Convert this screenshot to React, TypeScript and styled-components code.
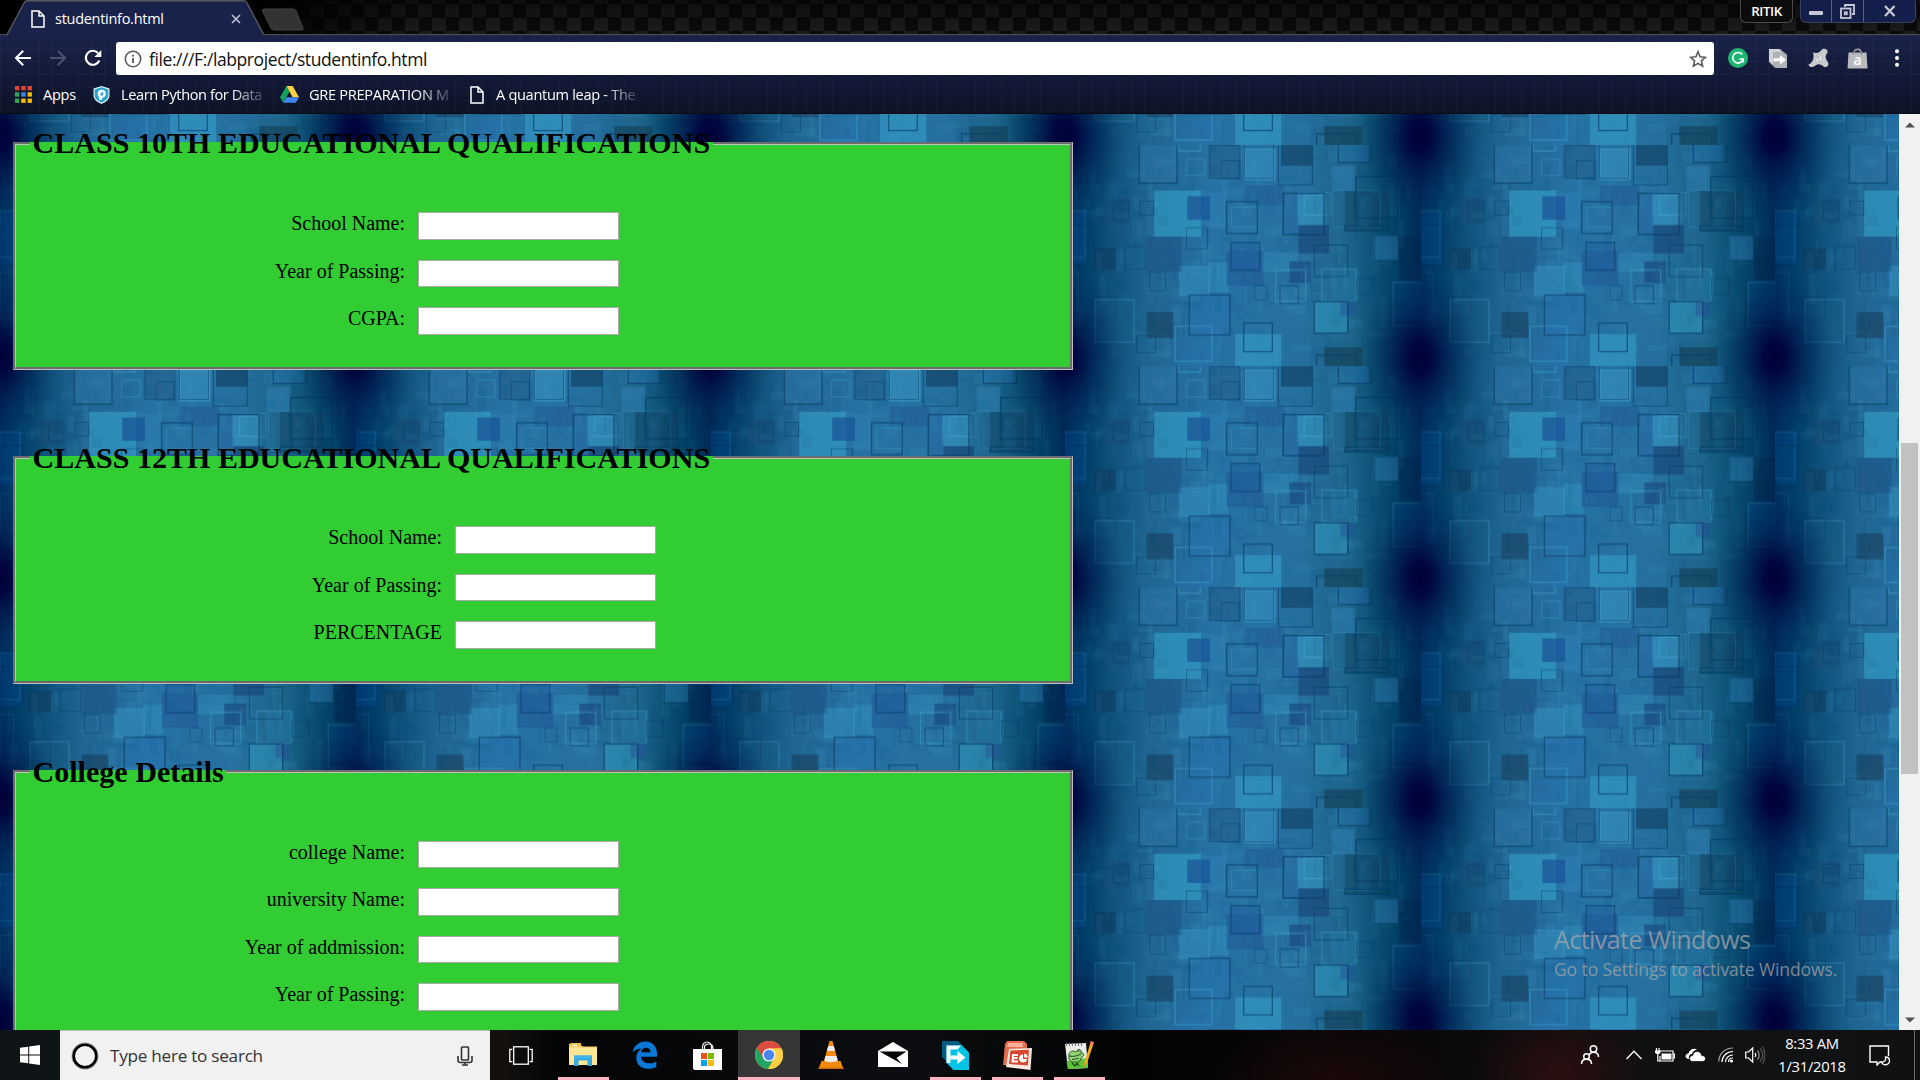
import React from 'react';
import styled, { createGlobalStyle } from 'styled-components';

const ui = '"Open Sans", "Noto Sans", sans-serif';
const serif = '"Liberation Serif", "Times New Roman", serif';

const GlobalStyle = createGlobalStyle`
  * { box-sizing: border-box; }
  html, body { margin: 0; padding: 0; background: #000; overflow: hidden; }
  svg { display: block; flex: none; }
`;

const Screen = styled.div`
  width: 1920px;
  height: 1080px;
  display: grid;
  grid-template-columns: 1920px;
  grid-template-rows: 114px 916px 50px;
  overflow: hidden;
  font-family: ${ui};
`;

/* ---------- browser chrome ---------- */

const Browser = styled.header`
  display: grid;
  grid-template-columns: 1920px;
  grid-template-rows: 35px 46px 33px;
  background:
    repeating-linear-gradient(90deg, rgba(120, 150, 220, 0.05) 0 1px, transparent 1px 13px),
    repeating-linear-gradient(0deg, rgba(120, 150, 220, 0.05) 0 1px, transparent 1px 13px),
    linear-gradient(#19224a 30%, #0d1226 100%);
`;

const TabStrip = styled.div`
  display: flex;
  justify-content: space-between;
  border-bottom: 1px solid #4c4c4c;
  background:
    linear-gradient(90deg, #000 0, #000 250px, transparent 420px),
    linear-gradient(rgba(0, 0, 0, 0.55), rgba(0, 0, 0, 0.05)),
    repeating-conic-gradient(#1e1e1e 0 25%, #0b0b0b 0 50%) 0 4px / 27px 27px;
`;

const Tabs = styled.div`
  display: flex;
  padding-left: 7px;
`;

const Tab = styled.div`
  position: relative;
  width: 257px;
  height: 36px;
  display: flex;
  align-items: center;
  padding: 2px 23px 0 24px;
  color: #fff;
`;

const TabShape = styled.svg`
  position: absolute;
  inset: 0;
`;

const TabTitle = styled.span`
  position: relative;
  margin-left: 10px;
  flex: 1;
  font-size: 14.5px;
  letter-spacing: -0.28px;
  line-height: 20px;
  margin-top: -1px;
`;

const Layer = styled.span`
  position: relative;
`;

const NewTab = styled.svg`
  margin: 8px 0 0 -3px;
`;

const WindowArea = styled.div`
  display: flex;
  align-items: flex-start;
  gap: 7px;
  padding-right: 4px;
`;

const UserBadge = styled.div`
  width: 53px;
  height: 23px;
  border: 1px solid #4a4a4a;
  border-top: 0;
  border-radius: 0 0 6px 6px;
  background: #0c0c0c;
  color: #fff;
  font-size: 13.3px;
  font-weight: 600;
  letter-spacing: -0.4px;
  line-height: 22px;
  text-align: center;
`;

const WindowButtons = styled.div`
  display: flex;
  height: 23px;
  border: 1px solid #39415f;
  border-top: 0;
  border-radius: 0 0 6px 6px;
  background: #131e4a;
  overflow: hidden;
`;

const WindowButton = styled.div<{ $w: number }>`
  width: ${(p) => p.$w}px;
  display: flex;
  align-items: center;
  justify-content: center;
  & + & { border-left: 1px solid #59617e; }
`;

const Toolbar = styled.div`
  display: flex;
  align-items: center;
  padding: 0 0 0 14px;
`;

const NavButtons = styled.div`
  display: flex;
  align-items: center;
  gap: 17px;
  width: 102px;
`;

const AddressBar = styled.div`
  width: 1598px;
  height: 33px;
  margin-top: 1px;
  padding: 0 7px 0 8px;
  display: flex;
  align-items: center;
  background: #fff;
  border-radius: 3px;
`;

const Url = styled.span`
  flex: 1;
  margin-left: 7px;
  color: #111;
  font-size: 17.5px;
  letter-spacing: -0.41px;
  line-height: 32px;
`;

const Extensions = styled.div`
  width: 206px;
  display: grid;
  grid-template-columns: 47px 34px 46px 33px 46px;
  justify-items: center;
  align-items: center;
`;

const Bookmarks = styled.nav`
  display: flex;
  align-items: center;
  padding: 0 0 5px 15px;
  border-bottom: 1px solid #070a16;
`;

const Bookmark = styled.div<{ $w: number; $gap: number }>`
  width: ${(p) => p.$w}px;
  display: flex;
  align-items: center;
  gap: ${(p) => p.$gap}px;
`;

const BookmarkText = styled.span<{ $fade?: boolean; $ls?: number }>`
  margin-top: -2px;
  white-space: nowrap;
  color: #fff;
  font-size: 14.6px;
  line-height: 20px;
  letter-spacing: ${(p) => p.$ls ?? -0.3}px;
  mask-image: ${(p) => (p.$fade ? 'linear-gradient(90deg, #000 78%, rgba(0, 0, 0, 0.2) 100%)' : 'none')};
`;

/* ---------- page ---------- */

const Viewport = styled.main`
  display: grid;
  grid-template-columns: 1899px 21px;
  min-height: 0;
`;

const Page = styled.div`
  position: relative;
  overflow: hidden;
`;

const Wallpaper = styled.svg`
  position: absolute;
  inset: 0;
`;

const Form = styled.form`
  position: relative;
  width: 1060px;
  margin-left: 13px;
  padding-top: 12px;
  font-family: ${serif};
  color: #000;
`;

const Section = styled.fieldset<{ $after: number; $height: number }>`
  margin: 0 0 ${(p) => p.$after}px;
  padding: 0;
  height: ${(p) => p.$height}px;
  min-width: 0;
  border: 3px groove #c0c0c0;
  background: #32cd32;
`;

const Legend = styled.legend<{ $line: number }>`
  margin-left: 14px;
  padding: 0 2.5px;
  height: 34px;
  font-size: 30px;
  font-weight: 700;
  line-height: ${(p) => p.$line}px;
  letter-spacing: 0.03px;
  white-space: nowrap;
`;

const Rows = styled.div<{ $labelWidth: number }>`
  display: grid;
  grid-template-columns: ${(p) => p.$labelWidth}px 201px;
  grid-auto-rows: 47.5px;
  column-gap: 13px;
  padding-top: 52px;
`;

const Label = styled.label`
  text-align: right;
  font-size: 20px;
  line-height: 23.5px;
`;

const Field = styled.input`
  width: 201px;
  height: 27.5px;
  border: 1px solid #a9a9a9;
  border-radius: 0;
  background: #fff;
  padding: 1px;
  outline: none;
`;

const Watermark = styled.div`
  position: absolute;
  left: 1554px;
  top: 807px;
  color: rgba(166, 166, 170, 0.75);
  white-space: nowrap;
`;

const WatermarkTitle = styled.div`
  font-size: 25px;
  line-height: 37px;
  letter-spacing: -0.55px;
`;

const WatermarkText = styled.div`
  margin-top: -1px;
  font-size: 17.5px;
  line-height: 24px;
  letter-spacing: -0.1px;
`;

const Scrollbar = styled.div`
  display: grid;
  grid-template-rows: 21px 1fr 21px;
  justify-items: center;
  align-items: center;
  background: #f1f1f1;
`;

const Track = styled.div`
  align-self: stretch;
  width: 17px;
  padding-top: 308px;
`;

const Thumb = styled.div`
  height: 331px;
  background: #c1c1c1;
`;

/* ---------- taskbar ---------- */

const Taskbar = styled.footer`
  display: flex;
  background:
    radial-gradient(90px 60px at 1560px 40px, #2c0f10, transparent),
    radial-gradient(120px 60px at 1330px 50px, #1c090a, transparent),
    linear-gradient(90deg, #0f1417 0, #0f1417 60px, #14100d 500px, #020405 560px, #0b0d10 900px, #020303 1130px, #0a0708 1400px, #101214 1700px, #101113 1920px);
`;

const StartButton = styled.div`
  width: 60px;
  display: flex;
  align-items: center;
  justify-content: center;
`;

const SearchBox = styled.div`
  width: 430px;
  display: flex;
  align-items: center;
  padding: 0 17px 0 11px;
  background: #f1f1f1;
  border-top: 1px solid #bbb;
`;

const SearchText = styled.span`
  flex: 1;
  margin-left: 11px;
  color: #333;
  font-size: 17.2px;
  letter-spacing: -0.28px;
`;

const TaskButton = styled.div<{ $open?: boolean; $active?: boolean }>`
  width: 62px;
  display: flex;
  flex-direction: column;
  align-items: center;
  justify-content: center;
  padding-top: 3px;
  background: ${(p) => (p.$active ? '#363636' : 'transparent')};
  &::after {
    content: '';
    width: ${(p) => (p.$active ? 62 : 51)}px;
    height: 3px;
    margin-top: auto;
    background: ${(p) => (p.$open || p.$active ? '#ffb3c1' : 'transparent')};
  }
  &::before {
    content: '';
    margin-top: auto;
  }
`;

const Tray = styled.div`
  margin-left: auto;
  display: flex;
  align-items: stretch;
`;

const TrayItem = styled.div<{ $w: number }>`
  width: ${(p) => p.$w}px;
  display: flex;
  align-items: center;
  justify-content: center;
`;

const Clock = styled.div`
  width: 84px;
  padding-top: 2px;
  color: #fff;
  font-size: 14.8px;
  line-height: 23px;
  letter-spacing: -0.3px;
  text-align: center;
`;

const ShowDesktop = styled.div`
  width: 6px;
  margin-left: 10px;
  border-left: 1px solid #6a6a6a;
`;

/* ---------- wallpaper tile ---------- */

type Box = [number, number, number, number, string, number?];

const patches: Box[] = [
  [328, 155, 140, 138, '#35a3cb', 0.7],
  [570, 585, 138, 96, '#38a2cc', 0.65],
  [650, 340, 110, 60, '#3fa6cf', 0.3],
  [755, 165, 85, 95, '#3ea6d2', 0.5],
  [600, 30, 90, 90, '#3ea2cf', 0.45],
  [985, 288, 75, 76, '#2b80b4', 0.65],
  [808, 490, 98, 92, '#36a5cb', 0.5],
  [405, 383, 88, 84, '#3798c8', 0.5],
  [490, 370, 60, 90, '#3aa0cb', 0.4],
  [470, 160, 70, 110, '#2f83bb', 0.4],
  [860, 80, 70, 76, '#2f83bb', 0.5],
  [870, 18, 100, 54, '#246fae', 0.5],
  [283, 20, 113, 112, '#2e78a8', 0.5],
  [305, 293, 105, 105, '#1b5286', 0.7],
  [427, 172, 68, 70, '#165296', 0.75],
  [545, 335, 110, 105, '#1c5494', 0.6],
  [560, 312, 84, 82, '#1f5a9c', 0.4],
  [145, 328, 68, 65, '#143f60', 0.75],
  [305, 520, 80, 78, '#17425f', 0.75],
  [760, 258, 92, 85, '#143f70', 0.65],
  [733, 367, 64, 65, '#153f78', 0.65],
  [708, 18, 94, 62, '#164062', 0.75],
  [490, 18, 95, 100, '#1c5580', 0.55],
  [600, 140, 120, 58, '#1d5592', 0.55],
  [720, 165, 40, 120, '#2468a4', 0.6],
  [900, 155, 132, 120, '#0b405f', 0.6],
  [838, 625, 115, 56, '#103a50', 0.7],
  [1063, 292, 62, 130, '#01264a', 0.6],
  [175, 178, 78, 78, '#194f74', 0.6],
  [887, 486, 42, 44, '#25509a', 0.5],
  [60, 215, 66, 160, '#04529a', 0.5],
  [1045, 430, 80, 110, '#054e90', 0.5],
  [433, 470, 122, 118, '#2474b4', 0.4],
  [150, 482, 117, 128, '#1b6288', 0.4],
  [400, 600, 100, 81, '#2673b3', 0.4],
  [860, 390, 80, 90, '#2a80b2', 0.4],
];

const darkFrames: Box[] = [
  [283, 10, 113, 122, '', 4], [545, 188, 92, 96, '', 4], [715, 163, 122, 124, '', 5],
  [558, 310, 86, 84, '', 4], [424, 266, 64, 64, '', 2], [240, 323, 62, 68, '', 2],
  [808, 318, 100, 95, '', 3], [705, 440, 55, 54, '', 3], [433, 468, 122, 120, '', 4],
  [596, 552, 86, 86, '', 4], [808, 488, 100, 95, '', 4], [932, 112, 125, 125, '', 4],
  [988, 290, 72, 74, '', 3], [205, 187, 47, 55, '', 2], [530, 65, 52, 55, '', 2],
  [60, 256, 68, 122, '', 4], [146, 474, 65, 68, '', 2], [313, 400, 48, 55, '', 2],
  [630, 440, 36, 42, '', 2], [880, 0, 100, 70, '', 4], [700, 0, 102, 138, '', 3],
  [935, 418, 50, 48, '', 2], [815, 648, 120, 60, '', 4], [155, 0, 8, 132, '', 3],
  [285, 187, 40, 42, '', 2], [598, 10, 88, 108, '', 2], [275, 590, 56, 52, '', 2],
  [900, 262, 130, 14, '', 4], [495, 20, 90, 98, '', 2],
];

const lightFrames: Box[] = [
  [600, 30, 90, 92, '', 5], [778, 168, 60, 60, '', 5], [830, 390, 103, 95, '', 4],
  [692, 393, 90, 94, '', 4], [390, 562, 110, 105, '', 5], [405, 383, 88, 85, '', 3],
  [150, 482, 117, 128, '', 4], [425, 60, 55, 50, '', 3], [1045, 430, 90, 130, '', 4],
  [760, 160, 98, 70, '', 3], [60, 215, 60, 140, '', 3], [400, 0, 66, 36, '', 5],
  [560, 205, 78, 60, '', 2], [866, 155, 140, 110, '', 2], [60, 400, 40, 140, '', 2],
];

const speckles: Box[] = (() => {
  let seed = 41;
  const rnd = () => {
    seed = (seed * 16807) % 2147483647;
    return seed / 2147483647;
  };
  const out: Box[] = [];
  for (let i = 0; i < 420; i++) {
    const tall = rnd() > 0.45;
    const w = tall ? 3 + rnd() * 30 : 14 + rnd() * 60;
    const h = tall ? 20 + rnd() * 80 : 3 + rnd() * 30;
    out.push([
      60 + rnd() * 1030, 18 + rnd() * 620, w, h,
      rnd() > 0.5 ? '#49a8d0' : '#0a4272', 0.03 + rnd() * 0.09,
    ]);
  }
  return out;
})();

const PageWallpaper = () => (
  <Wallpaper width="1899" height="916" aria-hidden>
    <defs>
      <linearGradient id="sides" x1="0" x2="1" y1="0" y2="0">
        <stop offset="0" stopColor="#003462" />
        <stop offset="0.05" stopColor="#00456d" />
        <stop offset="0.13" stopColor="#105680" />
        <stop offset="0.24" stopColor="#206694" />
        <stop offset="0.42" stopColor="#2672a4" />
        <stop offset="0.66" stopColor="#2570a0" />
        <stop offset="0.8" stopColor="#1c648a" />
        <stop offset="0.89" stopColor="#0a5276" />
        <stop offset="0.96" stopColor="#004166" />
        <stop offset="1" stopColor="#00345e" />
      </linearGradient>
      <linearGradient id="edge" x1="0" x2="1" y1="0" y2="0">
        <stop offset="0" stopColor="#002458" stopOpacity="0.35" />
        <stop offset="0.09" stopColor="#002c58" stopOpacity="0.2" />
        <stop offset="0.22" stopColor="#003060" stopOpacity="0" />
        <stop offset="0.82" stopColor="#003050" stopOpacity="0" />
        <stop offset="0.93" stopColor="#002a50" stopOpacity="0.25" />
        <stop offset="1" stopColor="#001c50" stopOpacity="0.4" />
      </linearGradient>
      <radialGradient id="corner">
        <stop offset="0" stopColor="#000036" />
        <stop offset="0.2" stopColor="#00033c" stopOpacity="0.9" />
        <stop offset="0.5" stopColor="#001246" stopOpacity="0.5" />
        <stop offset="1" stopColor="#002850" stopOpacity="0" />
      </radialGradient>
      <filter id="soft" x="0" y="0" width="1" height="1">
        <feGaussianBlur stdDeviation="0.6" />
      </filter>
      <pattern id="tile" width="355" height="221.1" y="31" patternUnits="userSpaceOnUse">
        <g transform="scale(0.33333) translate(-60 -18)">
          <rect x="60" y="18" width="1065" height="664" fill="url(#sides)" />
          <g opacity="0.85" filter="url(#soft)">
            {speckles.slice(0, 260).map(([x, y, w, h, c, o], i) => (
              <rect key={i} x={x} y={y} width={w} height={h} fill={c} opacity={o} />
            ))}
            {patches.map(([x, y, w, h, c, o], i) => (
              <rect key={i} x={x} y={y} width={w} height={h} fill={c} opacity={o} />
            ))}
            {speckles.slice(260).map(([x, y, w, h, c, o], i) => (
              <rect key={i} x={x} y={y} width={w} height={h} fill={c} opacity={o} />
            ))}
            {lightFrames.map(([x, y, w, h, , s], i) => (
              <rect key={i} x={x} y={y} width={w} height={h} fill="none" stroke="#4bb4dc" strokeWidth={s} opacity="0.35" />
            ))}
            {darkFrames.map(([x, y, w, h, , s], i) => (
              <rect key={i} x={x} y={y} width={w} height={h} fill="none" stroke="#06365f" strokeWidth={s} opacity="0.65" />
            ))}
          </g>
          <rect x="60" y="18" width="1065" height="664" fill="url(#edge)" />
          {[-9, 655].map((cy) =>
            [60, 1125].map((cx) => (
              <ellipse key={`${cx}-${cy}`} cx={cx} cy={cy} rx="180" ry="255" fill="url(#corner)" />
            )),
          )}
        </g>
      </pattern>
    </defs>
    <rect width="1899" height="916" fill="url(#tile)" />
  </Wallpaper>
);

/* ---------- icons ---------- */

const PageIcon = () => (
  <svg width="14" height="18" viewBox="0 0 14 18" fill="none" stroke="#fff" strokeWidth="1.5">
    <path d="M1 1h7l5 5v11H1z M8 1v5h5" />
  </svg>
);

const Icons = {
  back: (
    <svg width="18" height="18" viewBox="0 0 18 18" fill="none" stroke="#fff" strokeWidth="2">
      <path d="M17 9H2.5 M9.2 1.8L2 9l7.2 7.2" />
    </svg>
  ),
  forward: (
    <svg width="18" height="18" viewBox="0 0 18 18" fill="none" stroke="#4b5270" strokeWidth="2">
      <path d="M1 9h14.5 M8.8 1.8L16 9l-7.2 7.2" />
    </svg>
  ),
  reload: (
    <svg width="18" height="18" viewBox="0 0 18 18" fill="none" stroke="#fff" strokeWidth="2.1">
      <path d="M15.3 11.5A7 7 0 1 1 14 4" />
      <path d="M17.3 1v7h-7z" fill="#fff" stroke="none" />
    </svg>
  ),
  info: (
    <svg width="18" height="18" viewBox="0 0 18 18" fill="none" stroke="#5a5a5a" strokeWidth="1.6">
      <circle cx="9" cy="9" r="7.7" />
      <path d="M9 8v5 M9 4.8v1.8" strokeWidth="1.9" />
    </svg>
  ),
  star: (
    <svg width="18" height="18" viewBox="0 0 18 18" fill="none" stroke="#5a5a5a" strokeWidth="1.6">
      <path d="M9 1.8l2.1 5 5.3.5-4 3.6 1.2 5.3L9 13.4l-4.6 2.8 1.2-5.3-4-3.6 5.3-.5z" />
    </svg>
  ),
  grammarly: (
    <svg width="20" height="20" viewBox="0 0 20 20" fill="none">
      <circle cx="10" cy="10" r="10" fill="#1fb573" />
      <path d="M14.2 6.5A5.3 5.3 0 1 0 15.2 11h-3.8 M15.1 10.5v4" stroke="#fff" strokeWidth="1.7" />
    </svg>
  ),
  share: (
    <svg width="20" height="20" viewBox="0 0 20 20">
      <path d="M1 1h11l7 5.5V20H7L1 14z" fill="#9c9ea4" />
      <path d="M1 1h10l3 3H5v13l-4-4z" fill="#d3d3d6" />
      <path d="M5 4h9l5 4v12H9l-4-4z" fill="#b0b2b7" />
      <path d="M5.5 10.3h6.5V7l6 4.700-6 4.700v-3.200H5.500z" fill="#fff" />
    </svg>
  ),
  splat: (
    <svg width="21" height="21" viewBox="0 0 21 21">
      <path d="M5 4.500C8.500 5.500 11.500 5 13.500 2c2-2.500 7-1 6 2.500-2.500 3.500-2.500 5.500.3 9.500 2 3.500-1.300 6.500-4.300 4.500-3.500-3-5.500-3-8.500-.8C5 19.500 1.500 20 .5 16.500 5 14.500 6.500 10 5 4.500z" fill="#c9cacc" />
      <text x="10.8" y="13.5" fontSize="12" fontWeight="700" textAnchor="middle" fill="#fff" stroke="#9a9ca2" strokeWidth=".5" fontFamily={ui}>a</text>
    </svg>
  ),
  bag: (
    <svg width="21" height="21" viewBox="0 0 21 21">
      <path d="M6.5 6.5C6.5-.6 14.5-.6 14.5 6.5" fill="none" stroke="#bbb" strokeWidth="1.2" />
      <path d="M1.5 4.5h18l1 16H.5z" fill="#b9babd" />
      <path d="M6.5 6.5C6.5.5 14.5.5 14.5 6.5" fill="none" stroke="#777" />
      <text x="10.5" y="17" fontSize="14" fontWeight="600" textAnchor="middle" fill="#fff" fontFamily={ui}>a</text>
    </svg>
  ),
  dots: (
    <svg width="6" height="18" viewBox="0 0 6 18" fill="#fff">
      <circle cx="3" cy="2.2" r="2" /><circle cx="3" cy="9" r="2" /><circle cx="3" cy="15.8" r="2" />
    </svg>
  ),
  shield: (
    <svg width="17" height="18" viewBox="0 0 17 18">
      <path d="M8.5 0l8 2.5v7c0 4-4 7-8 8.500-4-1.500-8-4.500-8-8.500v-7z" fill="#d9f1f8" />
      <path d="M8.5 1.3l6.8 2.200v6c0 3.300-3.300 5.700-6.800 7-3.500-1.300-6.800-3.700-6.800-7v-6z" fill="#28a3cc" />
      <circle cx="8.7" cy="7.7" r="4" fill="#fff" />
      <path d="M6 14V9l3.500-3L11 8.500 9 11v3z" fill="#fff" />
      <path d="M7 8.500l2.500-3 1 2.500-2 2z" fill="#28a3cc" />
    </svg>
  ),
  drive: (
    <svg width="19" height="17" viewBox="0 0 19 17">
      <path d="M6.500 0L0 11.200l3.200 5.600L9.600 5.500z" fill="#11a25d" />
      <path d="M6.500 0h6.200L19 11.200h-6.400z" fill="#ffcf44" />
      <path d="M6.400 11.200H19l-3.200 5.600H3.200z" fill="#4285f4" />
    </svg>
  ),
};

const appColors = ['#ea4335', '#ea4335', '#ea4335', '#34a853', '#4285f4', '#fbbc05', '#34a853', '#fbbc05', '#fbbc05'];

const AppsIcon = () => (
  <svg width="17" height="17" viewBox="0 0 17 17">
    {appColors.map((c, i) => (
      <rect key={i} x={(i % 3) * 6.3} y={Math.floor(i / 3) * 6.3} width="4.3" height="4.3" fill={c} />
    ))}
  </svg>
);

const Arrow = ({ down }: { down?: boolean }) => (
  <svg width="10" height="6" viewBox="0 0 10 6" fill="#505050">
    <path d={down ? 'M0 .5h10l-5 5z' : 'M0 5.5h10l-5-5z'} />
  </svg>
);

const WinIcons = {
  start: (
    <svg width="20" height="20" viewBox="0 0 20 20" fill="#fff">
      <path d="M0 2.800L8.200 1.700v7.800H0z M9.200 1.500L20 0v9.500H9.200z M0 10.500h8.200v7.800L0 17.200z M9.200 10.500H20V20L9.200 18.500z" />
    </svg>
  ),
  cortana: (
    <svg width="28" height="28" viewBox="0 0 28 28" fill="none">
      <circle cx="14" cy="14" r="12.7" stroke="#999" strokeWidth="1.5" />
      <circle cx="14" cy="14" r="11.3" stroke="#000" strokeWidth="2.6" />
    </svg>
  ),
  mic: (
    <svg width="16" height="20" viewBox="0 0 16 20" fill="none" stroke="#333" strokeWidth="1.6">
      <rect x="4.5" y="1" width="7" height="13" rx=".8" />
      <path d="M1 10v4.500c0 1 1 2 2.500 2h9c1.500 0 2.500-1 2.500-2V10 M8 16.500V19 M5 19h6" />
    </svg>
  ),
  taskView: (
    <svg width="24" height="19" viewBox="0 0 24 19" fill="none" stroke="#fff" strokeWidth="1.3">
      <rect x="4.7" y=".8" width="14.6" height="17.4" />
      <path d="M3.400 3.400H.8v12.200h2.600 M20.600 3.400h2.600v12.200h-2.600" />
    </svg>
  ),
  explorer: (
    <svg width="28" height="24" viewBox="0 0 28 24">
      <path d="M0 1h11l2.500 2.500H28V22H0z" fill="#f6d478" />
      <path d="M1 0h11v3H1z" fill="#f0b93a" /><path d="M3.500 1.500H8v1.500H3.500z" fill="#fff" />
      <path d="M0 5h28v17H0z" fill="#ffe694" />
      <path d="M5 12.500h18V23h-4.500v-5.500h-9V23H5z" fill="#35a9e0" />
      <path d="M5 12.500h18v3H5z" fill="#45b4e8" />
    </svg>
  ),
  edge: (
    <svg width="26" height="28" viewBox="0 0 26 28">
      <path d="M.5 11.500C2 4.500 7 .5 13.500.5 20.500.5 25 5.500 25 12.500v3.200H9c.3 4.600 4 6.600 8.500 6.600 2.500 0 4.800-.7 6.800-1.900V26c-2.200 1.200-5 1.800-8 1.800C9 27.800 4.300 23.500 4.300 17c0-4 2-7.300 5.700-9.500C5.500 7.700 2.300 9.500.5 11.500zM9.200 11.200h9.300c0-2.800-1.400-4.500-4.300-4.500-2.700 0-4.500 1.700-5 4.500z" fill="#0a78d6" />
    </svg>
  ),
  store: (
    <svg width="29" height="29" viewBox="0 0 29 29">
      <path d="M9.500 8V6C9.500 3 11.500 1 14 1s4.500 2 4.500 5v2 M11.500 8V6.500c0-2 1.500-3.500 4-3.500s4.500 1.500 4.500 4.500V8" fill="none" stroke="#fff" strokeWidth="1.2" />
      <path d="M0 8h29v21H1.500L0 27.500z" fill="#fff" />
      <path d="M8 12h6v6H8z" fill="#f25022" /><path d="M15 12h6v6h-6z" fill="#7fba00" />
      <path d="M8 19h6v6H8z" fill="#00a4ef" /><path d="M15 19h6v6h-6z" fill="#ffb900" />
    </svg>
  ),
  chrome: (
    <svg width="28" height="28" viewBox="0 0 28 28">
      <circle cx="14" cy="14" r="14" fill="#fdd043" />
      <path d="M14 14L1.900 7A14 14 0 0 0 13 28l6.600-11z" fill="#1fa463" />
      <path d="M1.900 7A14 14 0 0 1 26.400 7.500H14L8.400 17z" fill="#dd4b3e" />
      <path d="M26.400 7.500H14l5.700 9.500L13 28A14 14 0 0 0 26.400 7.500z" fill="#fdd043" />
      <circle cx="14" cy="14" r="6.6" fill="#f5f5f5" /><circle cx="14" cy="14" r="5.2" fill="#4a86ee" />
    </svg>
  ),
  vlc: (
    <svg width="26" height="28" viewBox="0 0 26 28">
      <path d="M3.500 20h19l3 8H.5z" fill="#f28a12" /><path d="M.5 26.500h25V28H.5z" fill="#d46b05" />
      <path d="M11.500 0h3l6 22c-3 3-12 3-15 0z" fill="#f58a10" />
      <path d="M10.300 5h5.400l1.400 5H8.900z M7.500 15h11l1.200 4.500c-3 2.300-10.400 2.300-13.400 0z" fill="#ececec" />
    </svg>
  ),
  mail: (
    <svg width="30" height="26" viewBox="0 0 30 26">
      <path d="M0 9L15 0l15 9v16H0z" fill="#fff" />
      <path d="M1.500 9.500h27L18.500 16l5.500 6z" fill="#050607" />
    </svg>
  ),
  shareit: (
    <svg width="27" height="29" viewBox="0 0 27 29">
      <path d="M0 0h16l6 6v16H6l-6-6z" fill="#005b82" />
      <path d="M4.500 4.500H20l7 7V29H11.500l-7-7z" fill="#00c4e4" />
      <path d="M4.500 4.500H19l-3.500 4H8.500v13.500h-4z" fill="#f4fbfd" />
      <path d="M8.500 14.500h7V10l8 6.500-8 6.500v-4.500h-7z" fill="#fff" />
    </svg>
  ),
  ppt: (
    <svg width="29" height="29" viewBox="0 0 29 29">
      <path d="M4 0h17l3 3v23L0 24 2 3z" fill="#e46b4c" />
      <path d="M5 2h15v4H4z" fill="#f6b09b" />
      <path d="M6 8l23-1-1.500 22L3 26z" fill="#fbe9e2" />
      <path d="M7.500 9.500l18.500-.8-1.200 15.800-18.800-1.500z" fill="#d9472a" />
      <path d="M9 13h6v2h-4v1h3.500v2H11v1.500h4v2H8.500z" fill="#fff" />
      <path d="M20 13.500a4 4 0 1 0 4 4.500h-4z" fill="#fff" />
      <path d="M21.200 12.500v4h3.500a4 4 0 0 0-3.500-4z" fill="#fff" />
    </svg>
  ),
  notepad: (
    <svg width="30" height="29" viewBox="0 0 30 29">
      <path d="M1 3l21-1 2 25-20 1z" fill="#e9ede6" />
      <path d="M2.500 2v3 M5.500 2v3 M8.500 2v3 M11.500 2v3 M14.500 2v3 M17.500 2v3" stroke="#777" />
      <path d="M2.500 20l20.500-3 1 10-20 1z" fill="#5fc338" />
      <path d="M5 14c0-4 4-5 7-3 2-4 6-3 5 1 3-1 4 3 1 4l-3 5-6 0c-3 0-5-3-4-7z" fill="#8ed672" stroke="#2c4a26" strokeWidth=".9" />
      <path d="M5 15c5 1 8 0 12-2 M8 18.500l7-1 M14 9l1 2" stroke="#1f3a1b" fill="none" strokeWidth=".9" />
      <path d="M8 22l3 3 2-3 2 3" stroke="#1b4a12" fill="none" strokeWidth="1.2" />
      <path d="M27 0l3 1.500L23 22l-3 4 .5-5z" fill="#f6a51c" /><path d="M27 0l3 1.500-1 2.500-3-1.300z" fill="#e5707a" />
    </svg>
  ),
};

const TrayIcons = {
  people: (
    <svg width="20" height="20" viewBox="0 0 20 20" fill="none" stroke="#fff" strokeWidth="1.5">
      <circle cx="13.5" cy="4" r="3.2" /><circle cx="6.5" cy="11.5" r="2.8" />
      <path d="M9 10c1.500-2.500 3-2.800 4.500-2.800 3 0 5 2 5 4.800 M1.500 19c0-3 2-4.700 5-4.700s5 1.700 5 4.700" />
    </svg>
  ),
  chevron: (
    <svg width="16" height="10" viewBox="0 0 16 10" fill="none" stroke="#fff" strokeWidth="1.3">
      <path d="M.5 9L8 1.300 15.500 9" />
    </svg>
  ),
  battery: (
    <svg width="20" height="14" viewBox="0 0 20 14" fill="none" stroke="#fff" strokeWidth="1.2">
      <path d="M5 3h13v10H5V8 M18.500 6h1v4h-1" /><path d="M6.500 5.500h10v6h-10z" fill="#fff" stroke="none" />
      <path d="M1.500 0v3 M4 0v3" /><path d="M0 2.500h5.500v2.300L4 6H1.500L0 4.800z" fill="#fff" stroke="none" /><path d="M2.800 6v7H5" />
    </svg>
  ),
  cloud: (
    <svg width="21" height="14" viewBox="0 0 21 14" fill="#fff">
      <path d="M4 11C-1 11 0 5.500 3.500 5.500 4.500 1 9-.5 12 1.500c-3 .5-4.500 2.500-5 4.500C4 6 3.500 9 4 11z" />
      <path d="M7.500 13.500c-4 0-4-6 .2-6 .8-5.500 8-5.500 9 0 4.800 0 5 6 1 6z" stroke="#0c0d0f" strokeWidth=".7" />
    </svg>
  ),
  wifi: (
    <svg width="16" height="16" viewBox="0 0 16 16" fill="none" stroke="#fff" strokeWidth="1.2">
      <path d="M.8 14.500C.8 7 7 1 15 1" stroke="#a8a8a8" /><path d="M4 15C4 9 9 4.500 15 4.500 M7.500 15c0-4 3.500-7 7.500-7 M10.500 15c0-2.500 2-4 4.500-4" />
      <circle cx="13.5" cy="14" r="1.6" fill="#fff" stroke="none" />
    </svg>
  ),
  sound: (
    <svg width="20" height="18" viewBox="0 0 20 18" fill="none" stroke="#fff" strokeWidth="1.2">
      <path d="M.7 6h3l4-4v14l-4-4h-3z M10 7c1 1.200 1 2.800 0 4" />
      <path d="M12.500 4.500c2.200 2.500 2.200 6.500 0 9" stroke="#999" /><path d="M15 2.500c3.500 3.500 3.500 9.500 0 13 M17.500.5c3 4 3 13 0 17" stroke="#555" />
    </svg>
  ),
  action: (
    <svg width="21" height="21" viewBox="0 0 21 21" fill="none" stroke="#fff" strokeWidth="1.4">
      <path d="M13 17h-2l-3 3v-3H1V1h18.500v10" />
      <path d="M16.500 12c.8 3-1 5-4 5.500 2 3.500 8 3 8-2 0-1.800-1.500-3.300-4-3.500z" />
    </svg>
  ),
};

const sections = [
  { title: 'CLASS 10TH EDUCATIONAL QUALIFICATIONS', labelWidth: 389, height: 244, after: 70.3, line: 34, fields: ['School Name:', 'Year of Passing:', 'CGPA:'] },
  { title: 'CLASS 12TH EDUCATIONAL QUALIFICATIONS', labelWidth: 426, height: 244, after: 70.7, line: 35, fields: ['School Name:', 'Year of Passing:', 'PERCENTAGE'] },
  { title: 'College Details', labelWidth: 389, height: 420, after: 0, line: 34, fields: ['college Name:', 'university Name:', 'Year of addmission:', 'Year of Passing:'] },
];

export default function App() {
  return (
    <Screen>
      <GlobalStyle />
      <Browser>
        <TabStrip>
          <Tabs>
            <Tab>
              <TabShape width="258" height="36">
                <path d="M0 35.500L17 3Q18 .8 20 .8H237Q239 .8 240 3L257 35.500V36H0z" fill="#19224a" />
                <path d="M0 35L17 3Q18 .8 20 .8H237Q239 .8 240 3L257 35" fill="none" stroke="#5a5a5a" strokeWidth="1.4" />
              </TabShape>
              <Layer><PageIcon /></Layer>
              <TabTitle>studentinfo.html</TabTitle>
              <Layer>
                <svg width="10" height="10" viewBox="0 0 10 10" stroke="#c3c6d2" strokeWidth="1.6"><path d="M1 1l8 8M9 1L1 9" /></svg>
              </Layer>
            </Tab>
            <NewTab width="44" height="23">
              <path d="M3 1h29q2 0 3 2l7 17q.5 2-1.500 2H14q-3 0-4-2L1.500 3Q1 1 3 1z" fill="#333" stroke="#444" />
            </NewTab>
          </Tabs>
          <WindowArea>
            <UserBadge>RITIK</UserBadge>
            <WindowButtons>
              <WindowButton $w={30}>
                <svg width="14" height="8"><rect y="4" width="14" height="4" rx="1" fill="#c5c8d4" /></svg>
              </WindowButton>
              <WindowButton $w={32}>
                <svg width="15" height="15" viewBox="0 0 15 15" fill="none" stroke="#c5c8d4" strokeWidth="1.8">
                  <path d="M5 3V1h9v9h-2" /><rect x="1" y="4.5" width="9.5" height="9.5" /><rect x="4.8" y="8.3" width="2" height="2" />
                </svg>
              </WindowButton>
              <WindowButton $w={52}>
                <svg width="12" height="12" viewBox="0 0 12 12" stroke="#c5c8d4" strokeWidth="2.3"><path d="M1 1l9.500 10M10.500 1L1 11" /></svg>
              </WindowButton>
            </WindowButtons>
          </WindowArea>
        </TabStrip>
        <Toolbar>
          <NavButtons>{Icons.back}{Icons.forward}{Icons.reload}</NavButtons>
          <AddressBar>
            {Icons.info}
            <Url>file:///F:/labproject/studentinfo.html</Url>
            {Icons.star}
          </AddressBar>
          <Extensions>
            {Icons.grammarly}{Icons.share}{Icons.splat}{Icons.bag}{Icons.dots}
          </Extensions>
        </Toolbar>
        <Bookmarks>
          <Bookmark $w={78} $gap={11}><AppsIcon /><BookmarkText>Apps</BookmarkText></Bookmark>
          <Bookmark $w={187} $gap={11}>{Icons.shield}<BookmarkText $fade $ls={-0.42}>Learn Python for Data</BookmarkText></Bookmark>
          <Bookmark $w={190} $gap={10}>{Icons.drive}<BookmarkText $fade $ls={-0.3}>GRE PREPARATION M</BookmarkText></Bookmark>
          <Bookmark $w={190} $gap={12}><PageIcon /><BookmarkText $fade $ls={-0.32}>A quantum leap - The</BookmarkText></Bookmark>
        </Bookmarks>
      </Browser>

      <Viewport>
        <Page>
          <PageWallpaper />
          <Form>
            {sections.map((s) => (
              <Section key={s.title} $height={s.height} $after={s.after}>
                <Legend $line={s.line}>{s.title}</Legend>
                <Rows $labelWidth={s.labelWidth}>
                  {s.fields.map((f) => (
                    <React.Fragment key={f}>
                      <Label>{f}</Label>
                      <Field type="text" aria-label={f} />
                    </React.Fragment>
                  ))}
                </Rows>
              </Section>
            ))}
          </Form>
          <Watermark>
            <WatermarkTitle>Activate Windows</WatermarkTitle>
            <WatermarkText>Go to Settings to activate Windows.</WatermarkText>
          </Watermark>
        </Page>
        <Scrollbar>
          <Arrow />
          <Track><Thumb /></Track>
          <Arrow down />
        </Scrollbar>
      </Viewport>

      <Taskbar>
        <StartButton>{WinIcons.start}</StartButton>
        <SearchBox>
          {WinIcons.cortana}
          <SearchText>Type here to search</SearchText>
          {WinIcons.mic}
        </SearchBox>
        <TaskButton>{WinIcons.taskView}</TaskButton>
        <TaskButton $open>{WinIcons.explorer}</TaskButton>
        <TaskButton>{WinIcons.edge}</TaskButton>
        <TaskButton>{WinIcons.store}</TaskButton>
        <TaskButton $active>{WinIcons.chrome}</TaskButton>
        <TaskButton>{WinIcons.vlc}</TaskButton>
        <TaskButton>{WinIcons.mail}</TaskButton>
        <TaskButton $open>{WinIcons.shareit}</TaskButton>
        <TaskButton $open>{WinIcons.ppt}</TaskButton>
        <TaskButton $open>{WinIcons.notepad}</TaskButton>
        <Tray>
          <TrayItem $w={50}>{TrayIcons.people}</TrayItem>
          <TrayItem $w={38}>{TrayIcons.chevron}</TrayItem>
          <TrayItem $w={24}>{TrayIcons.battery}</TrayItem>
          <TrayItem $w={36}>{TrayIcons.cloud}</TrayItem>
          <TrayItem $w={26}>{TrayIcons.wifi}</TrayItem>
          <TrayItem $w={31}>{TrayIcons.sound}</TrayItem>
          <Clock><div>8:33 AM</div><div>1/31/2018</div></Clock>
          <TrayItem $w={50}>{TrayIcons.action}</TrayItem>
          <ShowDesktop />
        </Tray>
      </Taskbar>
    </Screen>
  );
}
